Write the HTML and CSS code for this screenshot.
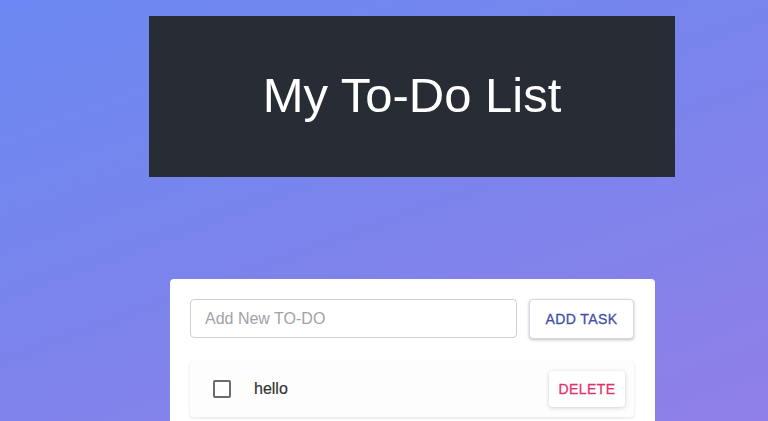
FILE: index.html
```html
<!DOCTYPE html>
<html>
<head>
<meta charset="utf-8">
<link rel="stylesheet" href="styles.css">
</head>
<body>
<div class="page">
  <header class="app-header">
    <h1 class="title">My To-Do List</h1>
  </header>
  <main class="card">
    <form class="add-row">
      <input class="task-input" type="text" placeholder="Add New TO-DO">
      <button class="btn btn-add" type="button">Add Task</button>
    </form>
    <ul class="todo-list">
      <li class="todo-item">
        <span class="checkbox"></span>
        <span class="todo-text">hello</span>
        <button class="btn btn-delete" type="button">Delete</button>
      </li>
    </ul>
  </main>
</div>
</body>
</html>
```
FILE: styles.css
```css
html, body {
  margin: 0;
  height: 100%;
}
body {
  background: linear-gradient(160deg, #6c89f3 0%, #7b84ec 50%, #8f7fe7 100%);
  font-family: "Liberation Sans", Arial, sans-serif;
  overflow: hidden;
}
.page {
  padding-top: 16px;
  width: 526px;
  margin-left: 149px;
}
.app-header {
  background: #282c34;
  height: 161px;
  display: flex;
  align-items: center;
  justify-content: center;
}
.title {
  margin: 0;
  color: #ffffff;
  font-size: 49px;
  font-weight: normal;
  line-height: 1;
  padding-bottom: 2px;
}
.card {
  margin: 102px 0 0 21px;
  width: 485px;
  background: #ffffff;
  border-radius: 4px;
  padding: 20px 21px 20px 20px;
  box-sizing: border-box;
}
.add-row {
  display: flex;
  gap: 12px;
  margin: 0;
}
.task-input {
  width: 327px;
  height: 39px;
  box-sizing: border-box;
  border: 1px solid #cfcfd4;
  border-radius: 4px;
  padding: 0 14px;
  font-family: "Liberation Sans", Arial, sans-serif;
  font-size: 16px;
  color: #333;
  outline: none;
}
.task-input::placeholder {
  color: #a2a2a6;
}
.btn {
  border: none;
  background: #ffffff;
  border-radius: 4px;
  font-family: "Liberation Sans", Arial, sans-serif;
  font-size: 14px;
  text-transform: uppercase;
  letter-spacing: 0.4px;
  cursor: pointer;
}
.btn-add {
  width: 105px;
  height: 40px;
  color: #3f51a5;
  border: 1px solid #d6d6e6;
  box-shadow: 0 1px 3px rgba(0, 0, 0, 0.25);
  -webkit-text-stroke: 0.3px #3f51a5;
}
.todo-list {
  list-style: none;
  margin: 22px 0 0;
  padding: 0;
}
.todo-item {
  display: flex;
  align-items: center;
  height: 56px;
  padding: 0 9px 0 23px;
  border-radius: 4px;
  background: #fdfdfd;
  box-shadow: 0 1px 3px rgba(0, 0, 0, 0.12);
}
.checkbox {
  width: 18px;
  height: 18px;
  box-sizing: border-box;
  border: 2px solid #6b6b6b;
  border-radius: 2px;
  flex: none;
}
.todo-text {
  margin-left: 23px;
  flex: 1;
  font-size: 16px;
  color: #333;
  -webkit-text-stroke: 0.2px #333;
}
.btn-delete {
  width: 76px;
  height: 36px;
  color: #e0336e;
  box-shadow: 0 1px 4px rgba(0, 0, 0, 0.18);
  -webkit-text-stroke: 0.3px #e0336e;
}
```
